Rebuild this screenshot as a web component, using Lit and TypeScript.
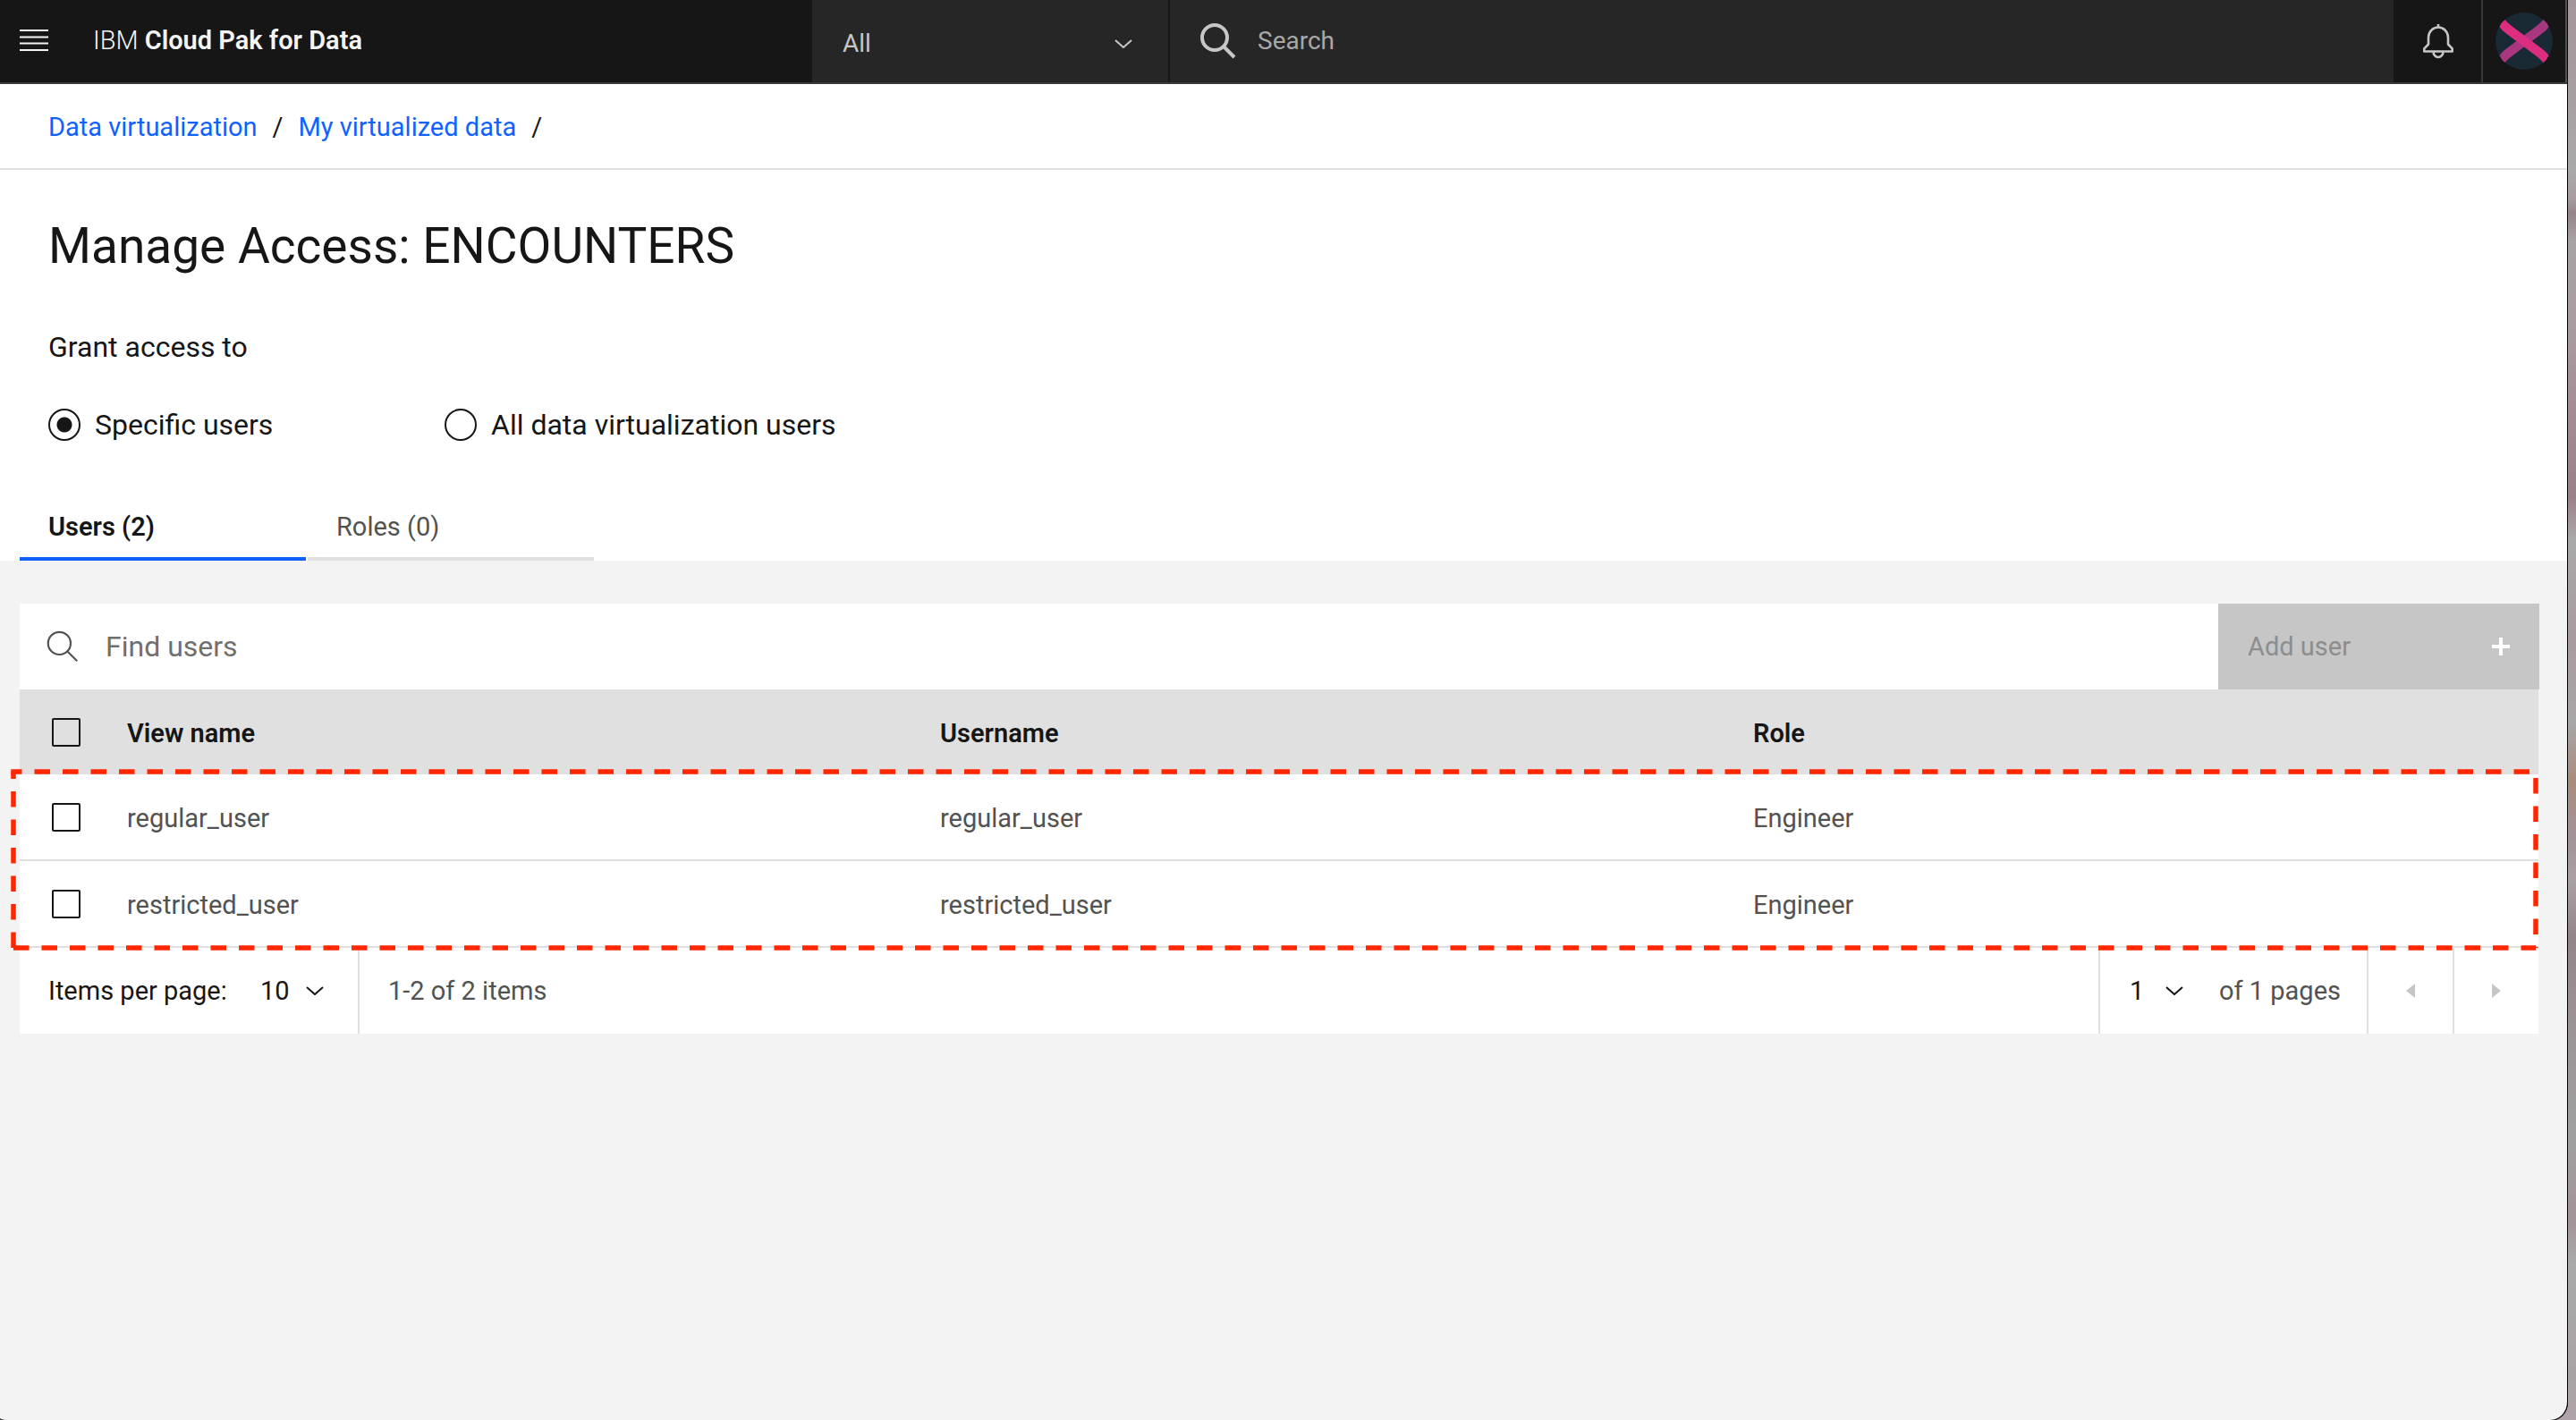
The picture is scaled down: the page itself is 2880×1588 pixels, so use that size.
import { LitElement, html, css, svg } from "lit";
import { customElement, state } from "lit/decorators.js";

interface UserRow {
  view: string;
  user: string;
  role: string;
}

const chevron = html`<svg class="chevron" viewBox="0 0 20 10" aria-hidden="true">
  <path d="M1 1 10 9 19 1" fill="none" stroke="currentColor" stroke-width="2" />
</svg>`;

const magnifier = (stroke: number) => html`<svg class="magnifier" viewBox="0 0 40 40" aria-hidden="true">
  <circle cx="16" cy="16" r="14" fill="none" stroke="currentColor" stroke-width=${stroke} />
  <path d="M26 26 38 38" fill="none" stroke="currentColor" stroke-width=${stroke} />
</svg>`;

@customElement("app-root")
export class AppRoot extends LitElement {
  @state() private scope = "specific";
  @state() private tab = "users";

  private rows: UserRow[] = [
    { view: "regular_user", user: "regular_user", role: "Engineer" },
    { view: "restricted_user", user: "restricted_user", role: "Engineer" },
  ];

  static styles = css`
    :host {
      display: block;
      box-sizing: border-box;
      min-height: 100vh;
      padding-right: 9px;
      background: linear-gradient(#a4959b 0, #a79ea3 7%, #aaa9ac 12%, #a89ca1 14%, #94858a 15%, #a9a2a6 17%, #a79ba0 24%, #a58b92 29%, #9c8087 35%, #aaa9aa 38%, #a89aa0 45%, #a8a6a8 51%, #a98c7c 55%, #a3929a 59%, #a9a0a5 62%, #94858a 66%, #9c9499 73%, #a0a0a0 80%, #a3929a 86%, #aaaaaa 89%, #a8a2a6 97%, #b0a3a9 100%);
      font-family: "Roboto", "Liberation Sans", sans-serif;
      font-size: 29px;
      line-height: 36px;
      color: #161616;
    }
    *, *::before, *::after { box-sizing: border-box; }
    svg { display: block; flex: none; }
    button, input, select {
      font: inherit;
      color: inherit;
      margin: 0;
      padding: 0;
      border: 0;
      border-radius: 0;
      background: transparent;
      appearance: none;
    }
    .window {
      display: flex;
      flex-direction: column;
      min-height: 100vh;
      border-right: 1px solid #000;
      border-radius: 0 0 20px 10px / 0 0 20px 2px;
      box-shadow: 0 1px 0 #000;
      overflow: hidden;
      background: #f3f3f3;
    }
    .topbar {
      display: flex;
      height: 94px;
      border-bottom: 2px solid #393939;
      background: #161616;
      color: #f4f4f4;
    }
    .brand {
      display: flex;
      align-items: center;
      flex: 0 0 908px;
      gap: 50px;
      padding: 0 22px 2px;
      font-weight: 300;
    }
    .brand b { font-weight: 600; }
    .menu svg { width: 32px; height: 24px; }
    .category {
      display: flex;
      align-items: center;
      flex: 0 0 400px;
      padding: 6px 40px 0 34px;
      border-right: 2px solid #161616;
      background: #262626;
      color: #c6c6c6;
      font-size: 28px;
    }
    .category select { flex: 1; width: 100%; margin-right: -20px; padding-right: 20px; }
    .chevron { width: 20px; height: 10px; pointer-events: none; }
    .global-search {
      display: flex;
      align-items: center;
      flex: 1;
      gap: 24px;
      padding-left: 34px;
      background: #262626;
      color: #c6c6c6;
      font-size: 28px;
    }
    .global-search input { flex: 1; }
    .global-search input::placeholder { color: #a8a8a8; opacity: 1; }
    .magnifier { width: 40px; height: 40px; }
    .bell {
      display: flex;
      align-items: center;
      justify-content: center;
      flex: 0 0 100px;
      padding-left: 2px;
      border-right: 2px solid #393939;
      color: #c6c6c6;
    }
    .bell svg { width: 34px; height: 40px; }
    .profile {
      display: flex;
      align-items: center;
      justify-content: center;
      flex: 0 0 94px;
      border-right: 2px solid #525252;
    }
    .profile svg { width: 64px; height: 64px; }
    .breadcrumb {
      display: flex;
      align-items: center;
      height: 96px;
      gap: 17px;
      padding: 2px 54px 0;
      border-bottom: 2px solid #e0e0e0;
      background: #fff;
    }
    .breadcrumb a { color: #0f62fe; text-decoration: none; }
    .intro { background: #fff; padding: 47px 22px 0; }
    h1 { margin: 0 32px; font-size: 55px; line-height: 76px; font-weight: 400; }
    fieldset { margin: 53px 32px 0; padding: 0; border: 0; font-size: 32px; line-height: 44px; }
    legend { padding: 0; }
    .choices { display: flex; gap: 443px; padding-top: 43px; }
    .choices label { display: flex; align-items: center; gap: 16px; width: 0; white-space: nowrap; }
    .choices input {
      flex: none;
      width: 36px;
      height: 36px;
      border: 2px solid #161616;
      border-radius: 50%;
    }
    .choices input:checked { background: radial-gradient(circle, #161616 8px, transparent 9px); }
    .tabs { display: flex; gap: 2px; padding-top: 50px; }
    .tabs button {
      width: 320px;
      height: 80px;
      padding: 8px 32px 0;
      border-bottom: 4px solid #e0e0e0;
      text-align: left;
      color: #525252;
    }
    .tabs button.active { border-color: #0f62fe; color: #161616; font-weight: 600; }
    .panel { padding: 48px 32px 0 22px; }
    .toolbar { display: flex; height: 96px; margin-right: -1px; background: #fff; }
    .find { display: flex; align-items: center; flex: 1; gap: 30px; padding-left: 30px; font-size: 32px; color: #525252; }
    .find .magnifier { width: 36px; height: 36px; }
    .find input { flex: 1; }
    .find input::placeholder { color: #6f6f6f; opacity: 1; }
    .add {
      display: flex;
      align-items: center;
      justify-content: space-between;
      flex: 0 0 359px;
      padding: 0 33px;
      background: #c6c6c6;
      color: #8d8d8d;
    }
    .add svg { width: 20px; height: 20px; color: #fff; }
    .grid { position: relative; }
    table { width: 100%; border-collapse: separate; border-spacing: 0; table-layout: fixed; }
    th, td { padding: 2px 0 0; text-align: left; background: #fff; }
    th { height: 95px; background: #e0e0e0; font-weight: 600; }
    td { height: 97px; border-bottom: 2px solid #e0e0e0; color: #525252; }
    .pick { width: 120px; padding: 0 0 0 36px; }
    .role { width: 878px; }
    .pick input { display: block; width: 32px; height: 32px; border: 2px solid #161616; border-radius: 2px; }
    .pick input:checked { background: #161616; }
    .callout {
      position: absolute;
      top: 92px;
      left: -7px;
      width: calc(100% + 4px);
      height: 197px;
      overflow: visible;
      pointer-events: none;
    }
    .pagination { display: flex; height: 96px; background: #fff; color: #525252; }
    .pagination > * { display: flex; align-items: center; }
    .size { width: 380px; padding-left: 32px; border-right: 2px solid #e0e0e0; color: #161616; }
    .size label { width: 237px; }
    .size select { width: 75px; margin-right: -24px; }
    .size .chevron { margin-left: 0; }
    .range { flex: 1; padding-left: 32px; }
    .page { width: 300px; padding-left: 33px; border-left: 2px solid #e0e0e0; }
    .page select { width: 64px; margin-right: -24px; color: #161616; }
    .page .chevron { color: #161616; margin-right: 40px; }
    .step { justify-content: center; width: 96px; border-left: 2px solid #e0e0e0; color: #c6c6c6; }
    .step svg { width: 10px; height: 16px; }
  `;

  private tabButton(id: string, text: string) {
    return html`<button
      role="tab"
      class=${this.tab === id ? "active" : ""}
      aria-selected=${this.tab === id}
      @click=${() => (this.tab = id)}
    >${text}</button>`;
  }

  private choice(id: string, text: string) {
    return html`<label>
      <input type="radio" name="scope" .checked=${this.scope === id} @change=${() => (this.scope = id)} />${text}
    </label>`;
  }

  private callout() {
    const edge = (x1: string, y1: string, x2: string, y2: string, offset: number) => svg`<line
      x1=${x1} y1=${y1} x2=${x2} y2=${y2} stroke-dashoffset=${offset} />`;
    return html`<svg class="callout" stroke="#ff2600" stroke-width="5.5" stroke-dasharray="17.5 14" aria-hidden="true">
      ${edge("0", "100%", "0", "0", 0)}
      ${edge("-2.7", "0", "100%", "0", 5.3)}
      ${edge("100%", "0", "100%", "100%", 24.5)}
      ${edge("100%", "100%", "-2.7", "100%", 1)}
    </svg>`;
  }

  render() {
    return html`<div class="window">
      <header class="topbar">
        <div class="brand">
          <button class="menu" aria-label="Menu">
            <svg viewBox="0 0 32 24"><path d="M0 1h32M0 8.5h32M0 15.5h32M0 23h32" stroke="#f4f4f4" stroke-width="2" /></svg>
          </button>
          <span>IBM <b>Cloud Pak for Data</b></span>
        </div>
        <div class="category">
          <select aria-label="Search category"><option>All</option></select>
          ${chevron}
        </div>
        <label class="global-search">
          ${magnifier(4)}
          <input type="search" placeholder="Search" aria-label="Search" />
        </label>
        <button class="bell" aria-label="Notifications">
          <svg viewBox="0 0 34 40" fill="none" stroke="currentColor" stroke-width="2.6" stroke-linejoin="round">
            <path d="M17 1v4M1.3 31.5v-3.2L6 23.5V16a11 11.5 0 0 1 22 0v7.5l4.7 4.8v3.2ZM11.5 32a5.5 6 0 0 0 11 0" />
          </svg>
        </button>
        <button class="profile" aria-label="Profile">
          <svg viewBox="0 0 64 64">
            <circle cx="32" cy="32" r="32" fill="#192a35" />
            <path d="M53.500 8 Q57.500 11 59.500 16 Q57 20 52 23.500 L18 49 Q14 52 10.500 56 Q6.500 53 4.500 48 Q7 44 12 40.500 L46 15 Q50 12 53.500 8Z" fill="#a93780" />
            <path d="M10.500 8 Q14 12 18 15 L52 40.500 Q57 44 59.500 48 Q57.500 53 53.500 56 Q50 52 46 49 L12 23.500 Q7 20 4.500 16 Q6.500 11 10.500 8Z" fill="#dc2d81" />
          </svg>
        </button>
      </header>
      <nav class="breadcrumb" aria-label="Breadcrumb">
        <a href="#data">Data virtualization</a><span>/</span>
        <a href="#mine">My virtualized data</a><span>/</span>
      </nav>
      <section class="intro">
        <h1>Manage Access: ENCOUNTERS</h1>
        <fieldset>
          <legend>Grant access to</legend>
          <div class="choices">
            ${this.choice("specific", "Specific users")}${this.choice("all", "All data virtualization users")}
          </div>
        </fieldset>
        <div class="tabs" role="tablist">
          ${this.tabButton("users", "Users (2)")}${this.tabButton("roles", "Roles (0)")}
        </div>
      </section>
      <main class="panel">
        <div class="toolbar">
          <label class="find">
            ${magnifier(2.4)}
            <input type="search" placeholder="Find users" aria-label="Find users" />
          </label>
          <button class="add" disabled>
            Add user
            <svg viewBox="0 0 20 20"><path d="M10 0v20M0 10h20" stroke="currentColor" stroke-width="4" /></svg>
          </button>
        </div>
        <div class="grid">
          <table>
            <thead>
              <tr>
                <th class="pick"><input type="checkbox" aria-label="Select all" /></th>
                <th>View name</th>
                <th>Username</th>
                <th class="role">Role</th>
              </tr>
            </thead>
            <tbody>
              ${this.rows.map(
                (r) => html`<tr>
                  <td class="pick"><input type="checkbox" aria-label=${r.view} /></td>
                  <td>${r.view}</td>
                  <td>${r.user}</td>
                  <td>${r.role}</td>
                </tr>`
              )}
            </tbody>
          </table>
          ${this.callout()}
        </div>
        <div class="pagination">
          <div class="size">
            <label for="size">Items per page:</label>
            <select id="size"><option>10</option></select>
            ${chevron}
          </div>
          <div class="range">1-2 of 2 items</div>
          <div class="page">
            <select aria-label="Page"><option>1</option></select>
            ${chevron}
            <span>of 1 pages</span>
          </div>
          <button class="step" disabled aria-label="Previous page">
            <svg viewBox="0 0 10 16"><path d="M10 0v16L0 8z" fill="currentColor" /></svg>
          </button>
          <button class="step" disabled aria-label="Next page">
            <svg viewBox="0 0 10 16"><path d="M0 0v16l10-8z" fill="currentColor" /></svg>
          </button>
        </div>
      </main>
    </div>`;
  }
}
